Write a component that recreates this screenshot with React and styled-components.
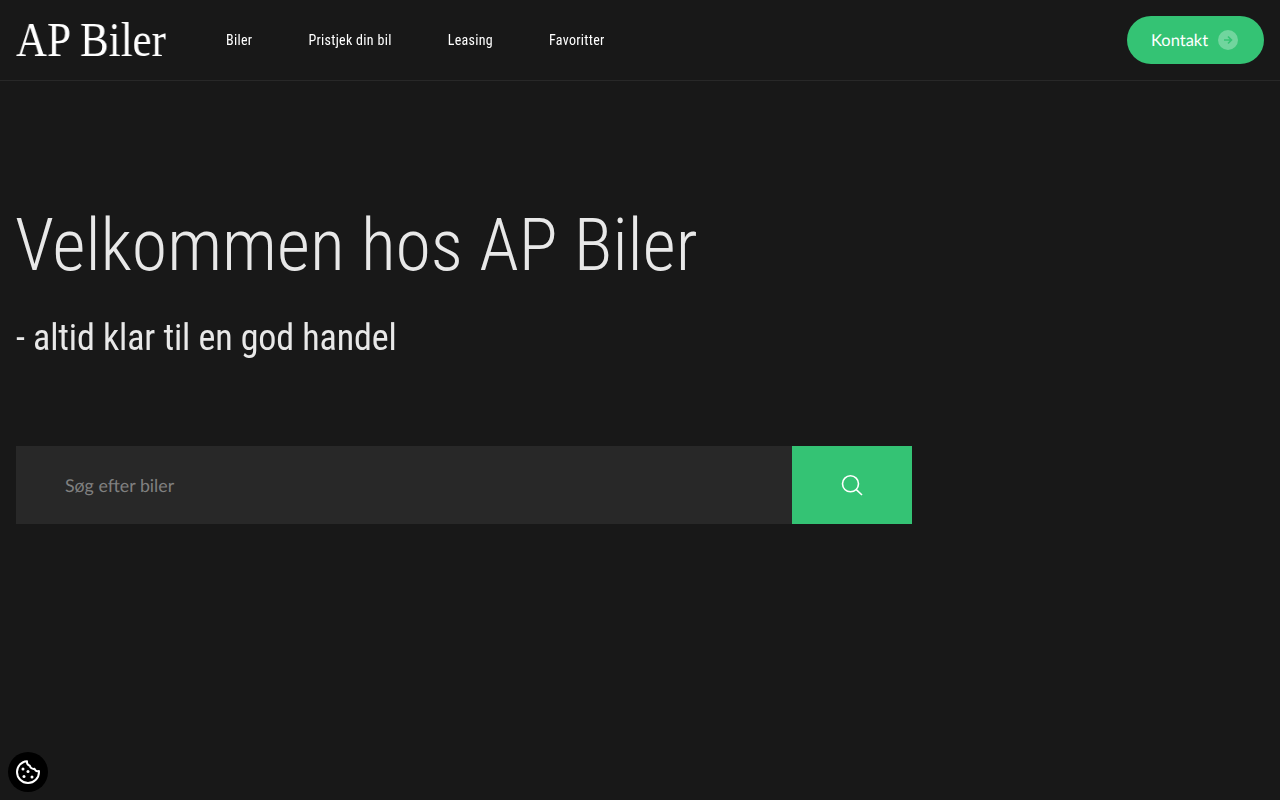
import React from "react";
import styled, { createGlobalStyle } from "styled-components";

const Global = createGlobalStyle`
  html, body { margin: 0; padding: 0; background: #181818; }
  body { font-family: Roboto, sans-serif; color: #fff; min-height: 800px; overflow: hidden; }
`;

const Page = styled.div`
  position: relative;
  height: 800px;
  background: #181818;
`;

const Header = styled.header`
  height: 80px;
  box-sizing: content-box;
  border-bottom: 1px solid #282828;
  display: flex;
  align-items: center;
  padding: 0 16px;
`;

const Logo = styled.a`
  font-family: "Liberation Serif", serif;
  font-size: 48px;
  line-height: 1;
  color: #fff;
  width: 150px;
  white-space: nowrap;
  transform: scaleX(0.895);
  transform-origin: left center;
  will-change: transform;
`;

const Nav = styled.nav`
  display: flex;
  margin-left: 60px;
  gap: 56px;
  flex: 1;
  will-change: opacity;
`;

const NavLink = styled.a`
  font-family: Roboto, sans-serif;
  font-stretch: 75%;
  font-size: 14px;
  letter-spacing: 0.3px;
  color: #fff;
`;

const Contact = styled.button`
  display: flex;
  align-items: center;
  gap: 10px;
  height: 48px;
  width: 137px;
  padding: 0 0 0 24px;
  border: 0;
  border-radius: 24px;
  background: #34c374;
  color: #fff;
  font-family: Lato, sans-serif;
  font-size: 16.5px;
  text-rendering: geometricPrecision;
`;

const ArrowDot = styled.span`
  width: 20px;
  height: 20px;
  border-radius: 50%;
  background: rgba(255, 255, 255, 0.3);
  display: flex;
  align-items: center;
  justify-content: center;
`;

const Hero = styled.main`
  padding: 123px 16px 0;
`;

const Title = styled.h1`
  margin: 0 0 0 -1px;
  font-family: Roboto, sans-serif;
  font-stretch: 75%;
  font-weight: 300;
  font-size: 72px;
  line-height: 84px;
  color: #e8e8e8;
  will-change: opacity;
`;

const Subtitle = styled.h2`
  margin: 29px 0 0;
  font-family: Roboto, sans-serif;
  font-stretch: 75%;
  font-weight: 400;
  font-size: 36px;
  letter-spacing: -0.1px;
  line-height: 42px;
  color: #e8e8e8;
  will-change: opacity;
`;

const Search = styled.form`
  display: flex;
  width: 896px;
  height: 78px;
  margin-top: 87px;
`;

const Field = styled.input`
  flex: 1;
  min-width: 0;
  border: 0;
  outline: 0;
  background: #282828;
  padding: 0 49px;
  font-family: Lato, sans-serif;
  font-size: 17.8px;
  text-rendering: geometricPrecision;
  color: #fff;
  &::placeholder { color: #808080; opacity: 1; }
`;

const SearchButton = styled.button`
  width: 120px;
  border: 0;
  padding: 0;
  background: #34c374;
  display: flex;
  align-items: center;
  justify-content: center;
`;

const CookieBadge = styled.button`
  position: absolute;
  left: 8px;
  bottom: 8px;
  width: 40px;
  height: 40px;
  border: 0;
  padding: 0;
  border-radius: 50%;
  background: #000;
  display: flex;
  align-items: center;
  justify-content: center;
`;

export default function App() {
  return (
    <Page>
      <Global />
      <Header>
        <Logo>AP Biler</Logo>
        <Nav>
          <NavLink>Biler</NavLink>
          <NavLink>Pristjek din bil</NavLink>
          <NavLink>Leasing</NavLink>
          <NavLink>Favoritter</NavLink>
        </Nav>
        <Contact>
          Kontakt
          <ArrowDot>
            <svg width="10" height="10" viewBox="0 0 10 10" fill="none" stroke="#34c374" strokeWidth="1.6">
              <path d="M1 5h7.500M5 1.500L8.500 5 5 8.500" />
            </svg>
          </ArrowDot>
        </Contact>
      </Header>
      <Hero>
        <Title>Velkommen hos AP Biler</Title>
        <Subtitle>- altid klar til en god handel</Subtitle>
        <Search>
          <Field placeholder="Søg efter biler" />
          <SearchButton aria-label="Søg">
            <svg width="22" height="22" viewBox="0 0 22 22" fill="none" stroke="#fff" strokeWidth="1.6">
              <circle cx="9.500" cy="9.800" r="8" />
              <path d="M15.300 15.600L21 21" />
            </svg>
          </SearchButton>
        </Search>
      </Hero>
      <CookieBadge aria-label="Cookies">
        <svg width="26" height="26" viewBox="0 0 26 26" fill="none" stroke="#fff" strokeWidth="2">
          <path d="M12 2.200C6.300 2.600 2 7.200 2 13c0 6 4.900 11 11 11s11-4.900 11-11c0-.4 0-.8-.1-1.100-1.900.6-3.800-.3-4.400-2.100-2.200.5-4.300-.9-4.700-3-1.900-.5-3-2.400-2.800-4.600z" strokeLinejoin="round" />
          <circle cx="8" cy="10" r="1.500" fill="#fff" stroke="none" />
          <circle cx="13" cy="12.500" r="1.500" fill="#fff" stroke="none" />
          <circle cx="9" cy="17.500" r="1.500" fill="#fff" stroke="none" />
          <circle cx="17" cy="18" r="1.500" fill="#fff" stroke="none" />
        </svg>
      </CookieBadge>
    </Page>
  );
}
